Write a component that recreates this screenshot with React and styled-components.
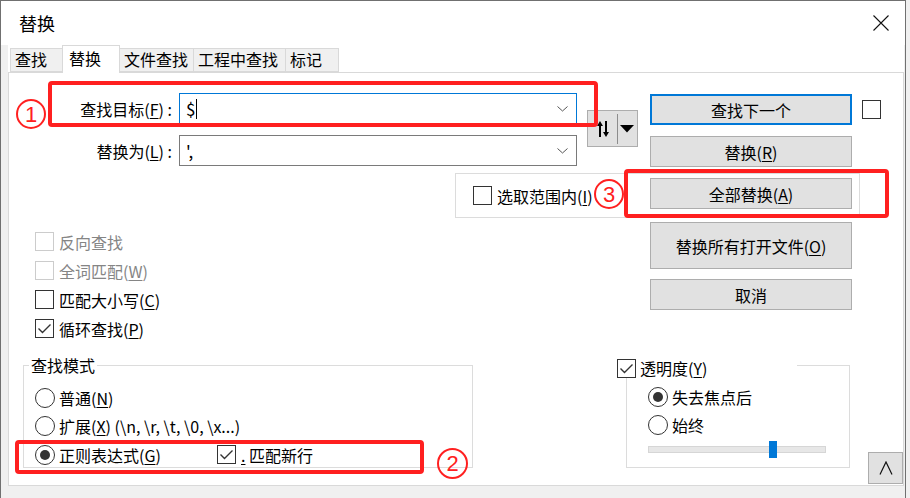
import React from "react";
import styled, { createGlobalStyle } from "styled-components";

const RED = "#ff2020";

const GlobalStyle = createGlobalStyle`
  html, body { margin: 0; padding: 0; background: #f0f0f0; }
  body {
    font-family: "Noto Sans CJK SC", "Noto Sans", sans-serif;
    font-size: 16px;
    color: #000;
  }
  * { box-sizing: border-box; }
`;

const Check = ({ checked, disabled }) => (
  <Box $disabled={disabled}>
    {checked && (
      <svg width="17" height="17" viewBox="0 0 17 17">
        <polyline points="2.5,8.5 6.5,12.5 14.5,4.5" fill="none" stroke="#333" strokeWidth="1.4" />
      </svg>
    )}
  </Box>
);

const Radio = ({ checked }) => <RadioCircle>{checked && <Dot />}</RadioCircle>;

const Chevron = () => (
  <svg width="11" height="6" viewBox="0 0 11 6">
    <polyline points="0.5,0.5 5.5,5 10.5,0.5" fill="none" stroke="#555" strokeWidth="1" />
  </svg>
);

const App = () => {
  const opacity = 68; // 透明度滑块位置 (%)

  return (
    <Frame>
      <GlobalStyle />
      <Window>
        <TitleBar>
          <Title>替换</Title>
          <Close>
            <svg width="16" height="16" viewBox="0 0 16 16">
              <path d="M0.5 0.5 L15.5 15.5 M15.5 0.5 L0.5 15.5" stroke="#111" strokeWidth="1.1" />
            </svg>
          </Close>
        </TitleBar>
        <Client>
          <TabStrip>
            <Tab $w={53}>查找</Tab>
            <Tab $w={58} $active>替换</Tab>
            <Tab $w={75}>文件查找</Tab>
            <Tab $w={93}>工程中查找</Tab>
            <Tab $w={54}>标记</Tab>
          </TabStrip>
          <Panel>
            <FieldsRow>
              <Fields>
                <FieldRow>
                  <FieldLabel>查找目标(<U>F</U>) :</FieldLabel>
                  <Combo $focus>
                    <ComboText>$<Caret /></ComboText>
                    <Chevron />
                  </Combo>
                </FieldRow>
                <FieldRow>
                  <FieldLabel>替换为(<U>L</U>) :</FieldLabel>
                  <Combo>
                    <ComboText>',</ComboText>
                    <Chevron />
                  </Combo>
                </FieldRow>
              </Fields>
              <SwapButton>
                <svg width="12" height="16" viewBox="0 0 12 16">
                  <path d="M3 16 V4" stroke="#000" strokeWidth="2" />
                  <path d="M0 5 L3 0 L6 5 Z" fill="#000" />
                  <path d="M9 0 V12" stroke="#000" strokeWidth="2" />
                  <path d="M6 11 L9 16 L12 11 Z" fill="#000" />
                </svg>
                <SwapSep />
                <svg width="14" height="8" viewBox="0 0 14 8">
                  <path d="M0 0 H14 L7 7.5 Z" fill="#000" />
                </svg>
              </SwapButton>
              <ButtonCol>
                <ButtonLine>
                  <Button $default>查找下一个</Button>
                  <Check />
                </ButtonLine>
                <Button>替换(<U>R</U>)</Button>
              </ButtonCol>
            </FieldsRow>

            <SelectionGroup>
              <CheckItem>
                <Check />
                <span>选取范围内(<U>I</U>)</span>
              </CheckItem>
              <Button $top>全部替换(<U>A</U>)</Button>
            </SelectionGroup>

            <BottomSection>
              <LeftCol>
                <Options>
                  <CheckItem $disabled>
                    <Check disabled />
                    <span>反向查找</span>
                  </CheckItem>
                  <CheckItem $disabled>
                    <Check disabled />
                    <span>全词匹配(<U>W</U>)</span>
                  </CheckItem>
                  <CheckItem>
                    <Check />
                    <span>匹配大小写(<U>C</U>)</span>
                  </CheckItem>
                  <CheckItem>
                    <Check checked />
                    <span>循环查找(<U>P</U>)</span>
                  </CheckItem>
                </Options>

                <ModeGroup>
                  <GroupTitle>查找模式</GroupTitle>
                  <ModeRows>
                    <RadioItem>
                      <Radio />
                      <span>普通(<U>N</U>)</span>
                    </RadioItem>
                    <RadioItem>
                      <Radio />
                      <span>扩展(<U>X</U>) (\n, \r, \t, \0, \x...)</span>
                    </RadioItem>
                    <RadioLine>
                      <RadioItem $w={182}>
                        <Radio checked />
                        <span>正则表达式(<U>G</U>)</span>
                      </RadioItem>
                      <CheckItem>
                        <Check checked />
                        <span><U>.</U> 匹配新行</span>
                      </CheckItem>
                    </RadioLine>
                  </ModeRows>
                </ModeGroup>
              </LeftCol>

              <RightCol>
                <Button $tall>替换所有打开文件(<U>O</U>)</Button>
                <Button>取消</Button>
                <TransRow>
                  <TransGroup>
                    <TransTitle>
                      <Check checked />
                      <span>透明度(<U>Y</U>)</span>
                    </TransTitle>
                    <TransRows>
                      <RadioItem>
                        <Radio checked />
                        <span>失去焦点后</span>
                      </RadioItem>
                      <RadioItem>
                        <Radio />
                        <span>始终</span>
                      </RadioItem>
                      <SliderRow>
                        <Track>
                          <Thumb style={{ left: `${opacity}%` }} />
                        </Track>
                      </SliderRow>
                    </TransRows>
                  </TransGroup>
                  <CollapseButton>
                    <svg width="14" height="14" viewBox="0 0 14 14">
                      <polyline points="1,13.5 7,1 13,13.5" fill="none" stroke="#111" strokeWidth="1.2" />
                    </svg>
                  </CollapseButton>
                </TransRow>
              </RightCol>
            </BottomSection>
          </Panel>
        </Client>
      </Window>

      {/* 标注 */}
      <RedBox $x={48} $y={81} $w={550} $h={46} />
      <RedBox $x={624} $y={169} $w={265} $h={49} />
      <RedBox $x={15} $y={440} $w={409} $h={34} />
      <Circled $x={16} $y={99} $d={30}>1</Circled>
      <Circled $x={594} $y={179} $d={30}>3</Circled>
      <Circled $x={437} $y={448} $d={31}>2</Circled>
    </Frame>
  );
};

export default App;

const Frame = styled.div`
  position: relative;
  width: 910px;
  height: 498px;
  overflow: hidden;
  background: #f0f0f0;
`;

const Window = styled.div`
  width: 906px;
  height: 498px;
  border: 1px solid #707070;
  border-bottom: none;
  background: #f0f0f0;
  display: flex;
  flex-direction: column;
`;

const TitleBar = styled.div`
  height: 44px;
  flex-shrink: 0;
  background: #fff;
  display: flex;
  align-items: center;
  padding: 0 16px 0 18px;
`;

const Title = styled.div`
  font-size: 18px;
  line-height: 24px;
`;

const Close = styled.div`
  margin-left: auto;
  display: flex;
  margin-top: -1px;
`;

const Client = styled.div`
  flex: 1;
  display: flex;
  flex-direction: column;
  padding: 0 1px 0 7px;
`;

const TabStrip = styled.div`
  height: 27px;
  display: flex;
  align-items: flex-end;
  background: #fff;
  padding-left: 2px;
`;

const Tab = styled.div`
  position: relative;
  width: ${(p) => p.$w}px;
  height: ${(p) => (p.$active ? 28 : 24)}px;
  margin-left: -1px;
  margin-bottom: ${(p) => (p.$active ? -1 : 0)}px;
  z-index: ${(p) => (p.$active ? 2 : 1)};
  border: 1px solid #d9d9d9;
  border-bottom: ${(p) => (p.$active ? "none" : "1px solid #d9d9d9")};
  background: ${(p) => (p.$active ? "#fff" : "#f0f0f0")};
  padding-left: ${(p) => (p.$active ? 6 : 4)}px;
  font-size: 16px;
  line-height: ${(p) => (p.$active ? 24 : 20)}px;
  white-space: nowrap;
  &:first-child { margin-left: 0; }
`;

const Panel = styled.div`
  width: 896px;
  height: 414px;
  border: 1px solid #d9d9d9;
  background: #fff;
  display: flex;
  flex-direction: column;
`;

const FieldsRow = styled.div`
  display: flex;
  align-items: flex-start;
  padding-top: 20px;
`;

const Fields = styled.div`
  display: flex;
  flex-direction: column;
  gap: 11px;
`;

const FieldRow = styled.div`
  display: flex;
  align-items: center;
`;

const FieldLabel = styled.div`
  width: 163px;
  margin-right: 7px;
  text-align: right;
  font-size: 16px;
  line-height: 20px;
  white-space: nowrap;
`;

const U = styled.u`
  text-underline-offset: 2px;
  text-decoration-thickness: 1px;
`;

const Combo = styled.div`
  width: 398px;
  height: 31px;
  border: 1px solid ${(p) => (p.$focus ? "#0078d7" : "#7a7a7a")};
  display: flex;
  align-items: center;
  padding: 0 8px 0 6px;
  justify-content: space-between;
`;

const ComboText = styled.div`
  display: flex;
  align-items: center;
  font-size: 17px;
  line-height: 22px;
`;

const Caret = styled.span`
  width: 1px;
  height: 20px;
  background: #000;
  margin-left: 1px;
`;

const SwapButton = styled.div`
  width: 51px;
  height: 37px;
  margin: 17px 0 0 10px;
  background: #e1e1e1;
  border: 1px solid #adadad;
  display: flex;
  align-items: center;
  padding-left: 9px;
`;

const SwapSep = styled.div`
  width: 1px;
  height: 30px;
  background: #8c8c8c;
  margin: 0 2px 0 8px;
`;

const ButtonCol = styled.div`
  display: flex;
  flex-direction: column;
  gap: 11px;
  margin: 1px 0 0 12px;
`;

const ButtonLine = styled.div`
  display: flex;
  align-items: center;
  gap: 10px;
`;

const Button = styled.div`
  width: 202px;
  height: ${(p) => (p.$tall ? 47 : 31)}px;
  flex-shrink: 0;
  background: #e1e1e1;
  border: ${(p) => (p.$default ? "2px solid #0078d7" : "1px solid #adadad")};
  display: flex;
  align-items: center;
  justify-content: center;
  font-size: 16px;
  line-height: 20px;
  white-space: nowrap;
  ${(p) => p.$top && "align-self: flex-start; margin: 4px 7px 0 auto;"}
`;

const Box = styled.div`
  width: 19px;
  height: 19px;
  flex-shrink: 0;
  border: 1px solid ${(p) => (p.$disabled ? "#cccccc" : "#333333")};
  background: #fff;
  display: flex;
`;

const SelectionGroup = styled.div`
  display: flex;
  align-items: center;
  width: 405px;
  height: 45px;
  margin: 6px 0 0 446px;
  border: 1px solid #dcdcdc;
  padding-left: 17px;
`;

const CheckItem = styled.label`
  display: flex;
  align-items: center;
  gap: 5px;
  height: 29px;
  font-size: 16px;
  line-height: 20px;
  white-space: nowrap;
  color: ${(p) => (p.$disabled ? "#858585" : "#000")};
`;

const BottomSection = styled.div`
  flex: 1;
  display: flex;
`;

const LeftCol = styled.div`
  width: 608px;
  display: flex;
  flex-direction: column;
`;

const Options = styled.div`
  display: flex;
  flex-direction: column;
  margin: 9px 0 0 26px;
`;

const ModeGroup = styled.div`
  width: 450px;
  height: 103px;
  margin: 22px 0 0 14px;
  border: 1px solid #dcdcdc;
  display: flex;
  flex-direction: column;
`;

const GroupTitle = styled.div`
  align-self: flex-start;
  margin: -9px 0 0 5px;
  padding: 0 2px;
  background: #fff;
  font-size: 16px;
  line-height: 16px;
`;

const ModeRows = styled.div`
  display: flex;
  flex-direction: column;
  padding: 11px 0 0 11px;
`;

const RadioLine = styled.div`
  display: flex;
  align-items: center;
`;

const RadioItem = styled.div`
  display: flex;
  align-items: center;
  gap: 4px;
  height: 28px;
  width: ${(p) => (p.$w ? `${p.$w}px` : "auto")};
  font-size: 16px;
  line-height: 20px;
  white-space: nowrap;
`;

const RadioCircle = styled.div`
  width: 20px;
  height: 20px;
  flex-shrink: 0;
  border: 1px solid #333;
  border-radius: 50%;
  background: #fff;
  display: flex;
  align-items: center;
  justify-content: center;
`;

const Dot = styled.div`
  width: 10px;
  height: 10px;
  border-radius: 50%;
  background: #333;
`;

const RightCol = styled.div`
  flex: 1;
  display: flex;
  flex-direction: column;
  gap: 10px;
  padding-left: 33px;
  margin-top: 4px;
`;

const TransRow = styled.div`
  display: flex;
  align-items: flex-start;
  margin: 45px 0 0 -24px;
`;

const TransGroup = styled.div`
  width: 224px;
  height: 103px;
  border: 1px solid #dcdcdc;
  display: flex;
  flex-direction: column;
`;

const TransTitle = styled.div`
  display: flex;
  align-items: center;
  gap: 4px;
  width: 180px;
  height: 20px;
  margin: -8px 0 0 -10px;
  background: #fff;
  font-size: 16px;
  line-height: 20px;
`;

const TransRows = styled.div`
  display: flex;
  flex-direction: column;
  padding: 5px 0 0 21px;
`;

const SliderRow = styled.div`
  height: 17px;
  margin-top: 2px;
  display: flex;
  align-items: center;
`;

const Track = styled.div`
  position: relative;
  width: 178px;
  height: 7px;
  background: #e7e7e7;
  border: 1px solid #d6d6d6;
`;

const Thumb = styled.div`
  position: absolute;
  top: -6px;
  width: 8px;
  height: 17px;
  background: #0078d7;
`;

const CollapseButton = styled.div`
  width: 35px;
  height: 32px;
  margin: 87px 0 0 18px;
  background: #e1e1e1;
  border: 1px solid #adadad;
  display: flex;
  align-items: center;
  justify-content: center;
`;

const RedBox = styled.div`
  position: absolute;
  left: ${(p) => p.$x}px;
  top: ${(p) => p.$y}px;
  width: ${(p) => p.$w}px;
  height: ${(p) => p.$h}px;
  border: 4px solid ${RED};
  border-radius: 4px;
  pointer-events: none;
`;

const Circled = styled.div`
  position: absolute;
  left: ${(p) => p.$x}px;
  top: ${(p) => p.$y}px;
  width: ${(p) => p.$d}px;
  height: ${(p) => p.$d}px;
  border: 2px solid ${RED};
  border-radius: 50%;
  color: ${RED};
  display: flex;
  align-items: center;
  justify-content: center;
  font-family: "Liberation Sans", Arial, sans-serif;
  font-size: ${(p) => Math.round(p.$d * 0.72)}px;
  line-height: 1;
  padding-top: 1px;
`;
